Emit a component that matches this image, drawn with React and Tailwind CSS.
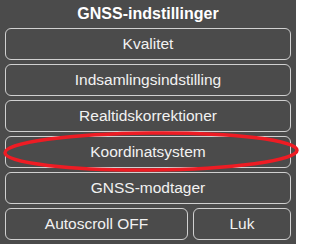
import React from 'react';

const Btn = ({ children, className = '' }) => (
  <button className={`h-[32px] rounded-[6px] border border-[#d0d0d0] bg-[#4b4b4b] text-[15.5px] text-[#f2f2f2] ${className}`}>
    {children}
  </button>
);

export default function App() {
  return (
    <div className="h-[248px] w-[300px] bg-white" style={{ fontFamily: '"Liberation Sans", Arial, sans-serif' }}>
      <div className="relative flex h-[244px] w-[296px] flex-col bg-[#4b4b4b] px-[5px]">
        <div className="flex h-[28px] items-center justify-center text-[16px] font-bold text-white">GNSS-indstillinger</div>
        <div className="flex flex-col gap-[4px]">
          <Btn>Kvalitet</Btn>
          <Btn>Indsamlingsindstilling</Btn>
          <Btn>Realtidskorrektioner</Btn>
          <Btn>Koordinatsystem</Btn>
          <Btn>GNSS-modtager</Btn>
          <div className="flex gap-[5px]">
            <Btn className="w-[183px]">Autoscroll OFF</Btn>
            <Btn className="flex-1">Luk</Btn>
          </div>
        </div>
        <svg className="pointer-events-none absolute left-0 top-0" width="300" height="248">
          <ellipse cx="151" cy="151.5" rx="146" ry="18.5" fill="none" stroke="#ee1c24" strokeWidth="3.5" transform="rotate(-0.5 151 151.5)" />
        </svg>
      </div>
    </div>
  );
}
